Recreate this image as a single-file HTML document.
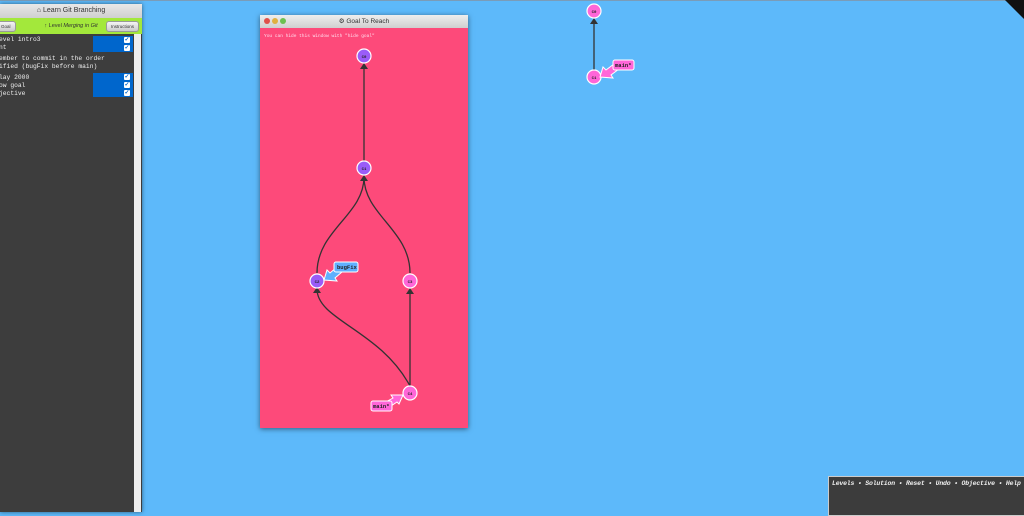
<!DOCTYPE html>
<html><head><style>
body{margin:0;width:1024px;height:512px;overflow:hidden;background:#5db9fa;position:relative;font-family:"Liberation Sans",sans-serif}
.mono{font-family:"Liberation Mono","DejaVu Sans Mono",monospace}
#left{position:absolute;left:0;top:4px;width:142px;height:508px;background:#3d3d3d;box-shadow:0 0 4px rgba(0,0,0,.5)}
#left .tb{height:14px;background:linear-gradient(#e8e8e8,#cfcfcf);font-size:7px;color:#333;text-align:center;line-height:14px}
#left .gb{height:16px;background:#a3e83b;font-size:5.5px;line-height:16px;text-align:center;color:#333;position:relative}
.btn{position:absolute;top:3px;height:9px;line-height:9px;background:linear-gradient(#f4f4f4,#ccc);border:1px solid #999;border-radius:3px;font-size:4.5px;padding:0 4px}
.line{position:absolute;left:-1px;font-size:6.3px;line-height:8px;color:#eee;white-space:pre}
.hl{position:absolute;left:93px;width:40px;background:#0066cc}
.cb{position:absolute;left:124px;width:6px;height:6px;background:#fff;border-radius:1px;font-size:6px;line-height:6px;color:#0066cc;text-align:center;font-weight:bold}
#goal{position:absolute;left:260px;top:15px;width:208px;height:413px;background:#fd4a7a;box-shadow:0 1px 5px rgba(0,0,0,.5)}
#goal .tb{height:13px;background:linear-gradient(#eee,#cfcfcf);font-size:6.5px;color:#333;text-align:center;line-height:13px;position:relative}
.dot{position:absolute;top:3px;width:6px;height:6px;border-radius:50%}
#bar{position:absolute;left:828px;top:476px;width:200px;height:40px;background:#3c3c3c;border:1px solid #ccc;font-size:6.5px;font-style:italic;font-weight:bold;color:#eee;padding:3px 0 0 3px;box-sizing:border-box;white-space:nowrap;letter-spacing:-0.2px}
</style></head><body>
<div style="position:absolute;left:0;top:0;width:1024px;height:1px;background:#7a9cb8"></div>
<svg style="position:absolute;left:1005px;top:0" width="19" height="19"><polygon points="0,0 19,0 19,19" fill="#111"/></svg>
<div id="left">
<div class="tb">&#8962; Learn Git Branching</div>
<div class="gb"><span class="btn" style="left:-4px">Goal</span>&#8593; Level <i>Merging in Git</i><span class="btn" style="right:3px">Instructions</span></div>
<div style="position:absolute;left:134px;top:30px;width:7px;height:478px;background:#eee"></div>
<div class="hl" style="top:32px;height:16px"></div>
<div class="hl" style="top:69px;height:24px"></div>
<div class="cb" style="top:33px">&#10003;</div><div class="cb" style="top:41px">&#10003;</div>
<div class="cb" style="top:70px">&#10003;</div><div class="cb" style="top:78px">&#10003;</div><div class="cb" style="top:86px">&#10003;</div>
<div class="line mono" style="top:32px">evel intro3</div>
<div class="line mono" style="top:40px">nt</div>
<div class="line mono" style="top:51px">ember to commit in the order</div>
<div class="line mono" style="top:59px">ified (bugFix before main)</div>
<div class="line mono" style="top:70px">lay 2000</div>
<div class="line mono" style="top:78px">ow goal</div>
<div class="line mono" style="top:86px">jective</div>
</div>
<div id="goal">
<div class="tb"><span class="dot" style="left:4px;background:#e0504a"></span><span class="dot" style="left:12px;background:#e0b040"></span><span class="dot" style="left:20px;background:#6cc050"></span>&#9881; Goal To Reach</div>
<div class="mono" style="position:absolute;left:4px;top:19px;font-size:4.5px;color:#fde">You can hide this window with "hide goal"</div>
</div>
<svg style="position:absolute;left:0;top:0" width="1024" height="512" font-family="Liberation Mono,monospace">
<g stroke="#333" stroke-width="1.3" fill="none">
<line x1="364" y1="161" x2="364" y2="65"/>
<path d="M317 273 C317 230 364 215 364 177"/>
<path d="M410 273 C410 230 364 215 364 177"/>
<path d="M410 386 C380 330 317 320 317 289"/>
<line x1="410" y1="386" x2="410" y2="290"/>
<line x1="594" y1="70" x2="594" y2="20"/>
</g>
<g fill="#333">
<polygon points="364,63 360,69 368,69"/><polygon points="364,175 360,181 368,181"/>
<polygon points="317,287 313,293 321,293"/><polygon points="410,288 406,294 414,294"/>
<polygon points="594,18 590,24 598,24"/>
</g>
<g stroke="#fff" stroke-width="1.2">
<circle cx="364" cy="56" r="7" fill="#9a5cf8"/><circle cx="364" cy="168" r="7" fill="#9a5cf8"/>
<circle cx="317" cy="281" r="7" fill="#9a5cf8"/><circle cx="410" cy="281" r="7" fill="#ff66d8"/>
<circle cx="410" cy="393" r="7" fill="#ff66d8"/>
<circle cx="594" cy="11" r="7" fill="#ff66d8"/><circle cx="594" cy="77" r="7" fill="#ff66d8"/>
</g>
<g font-size="4" text-anchor="middle" fill="#222" font-weight="bold">
<text x="364" y="58">C0</text><text x="364" y="170">C1</text><text x="317" y="283">C2</text><text x="410" y="283">C3</text><text x="410" y="395">C4</text>
<text x="594" y="13">C0</text><text x="594" y="79">C1</text>
</g>
<g stroke="#fff" stroke-width="1">
<polygon points="324,280 327,270 330,273 337,267 342,272 335,278 337,281" fill="#5fb0ff"/>
<rect x="334" y="262" width="24" height="10" rx="2" fill="#5fb0ff"/>
<polygon points="403,395 399,404 397,402 388,408 384,403 393,398 391,395" fill="#ff66d8"/>
<rect x="371" y="401" width="21" height="10" rx="2" fill="#ff66d8"/>
<polygon points="600,77 603,67 606,70 614,64 619,69 611,75 613,78" fill="#ff66d8"/>
<rect x="613" y="60" width="21" height="10" rx="2" fill="#ff66d8"/>
</g>
<g font-size="5.5" fill="#222" font-weight="bold">
<text x="337" y="269">bugFix</text><text x="373" y="408">main*</text><text x="615" y="67">main*</text>
</g>
</svg>
<div id="bar" class="mono">Levels • Solution • Reset • Undo • Objective • Help •</div>
</body></html>
